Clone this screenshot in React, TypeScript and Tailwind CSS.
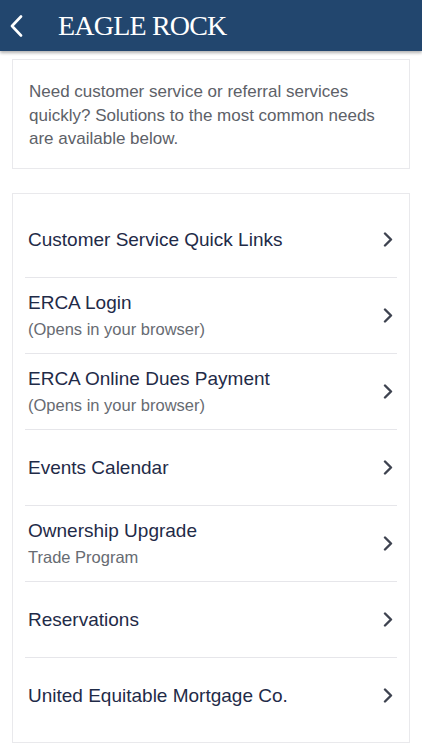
import React from "react";

const rows: { title: string; sub?: string }[] = [
  { title: "Customer Service Quick Links" },
  { title: "ERCA Login", sub: "(Opens in your browser)" },
  { title: "ERCA Online Dues Payment", sub: "(Opens in your browser)" },
  { title: "Events Calendar" },
  { title: "Ownership Upgrade", sub: "Trade Program" },
  { title: "Reservations" },
  { title: "United Equitable Mortgage Co." },
];

function Chevron() {
  return (
    <svg width="10" height="15" viewBox="0 0 10 15" className="shrink-0">
      <path d="M2 1.5 L8 7.5 L2 13.5" fill="none" stroke="#3e4350" strokeWidth="2.4" strokeLinecap="round" strokeLinejoin="round" />
    </svg>
  );
}

export default function App() {
  return (
    <div className="w-[422px] h-[750px] bg-white overflow-hidden" style={{ fontFamily: '"Liberation Sans", Arial, sans-serif' }}>
      <div className="relative z-10 h-[51px] bg-[#22466e] flex items-center shadow-[0_2px_3px_rgba(0,0,0,0.3)]">
        <div className="w-[58px] flex items-center pl-[10px]">
          <svg width="13" height="22" viewBox="0 0 13 22">
            <path d="M11 1.5 L2 11 L11 20.5" fill="none" stroke="#ffffff" strokeWidth="2.6" strokeLinecap="round" strokeLinejoin="round" />
          </svg>
        </div>
        <div className="text-white text-[28px] tracking-[-0.8px] leading-none pt-[1px]" style={{ fontFamily: '"Liberation Serif", "Times New Roman", serif' }}>
          EAGLE ROCK
        </div>
      </div>
      <div className="px-3 pt-2">
        <div className="border border-[#e9e9ec] pl-[16px] pr-3 pt-[20px] pb-[17px] text-[17px] leading-[23.5px] text-[#5d6168]">
          Need customer service or referral services quickly? Solutions to the most common needs are available below.
        </div>
        <div className="mt-6 border border-[#e9e9ec] px-3 pt-2 pb-2">
          {rows.map((r, i) => (
            <div
              key={r.title}
              className={`h-[76px] flex items-center justify-between pl-[3px] pr-[4px] ${i < rows.length - 1 ? "border-b border-[#e6e6ea]" : ""}`}
            >
              <div className="flex flex-col pt-[1px]">
                <div className="text-[19px] leading-[26px] text-[#1f2b48]">{r.title}</div>
                {r.sub && <div className="text-[16.5px] leading-[24px] mt-[1px] text-[#676b72]">{r.sub}</div>}
              </div>
              <Chevron />
            </div>
          ))}
        </div>
      </div>
    </div>
  );
}
